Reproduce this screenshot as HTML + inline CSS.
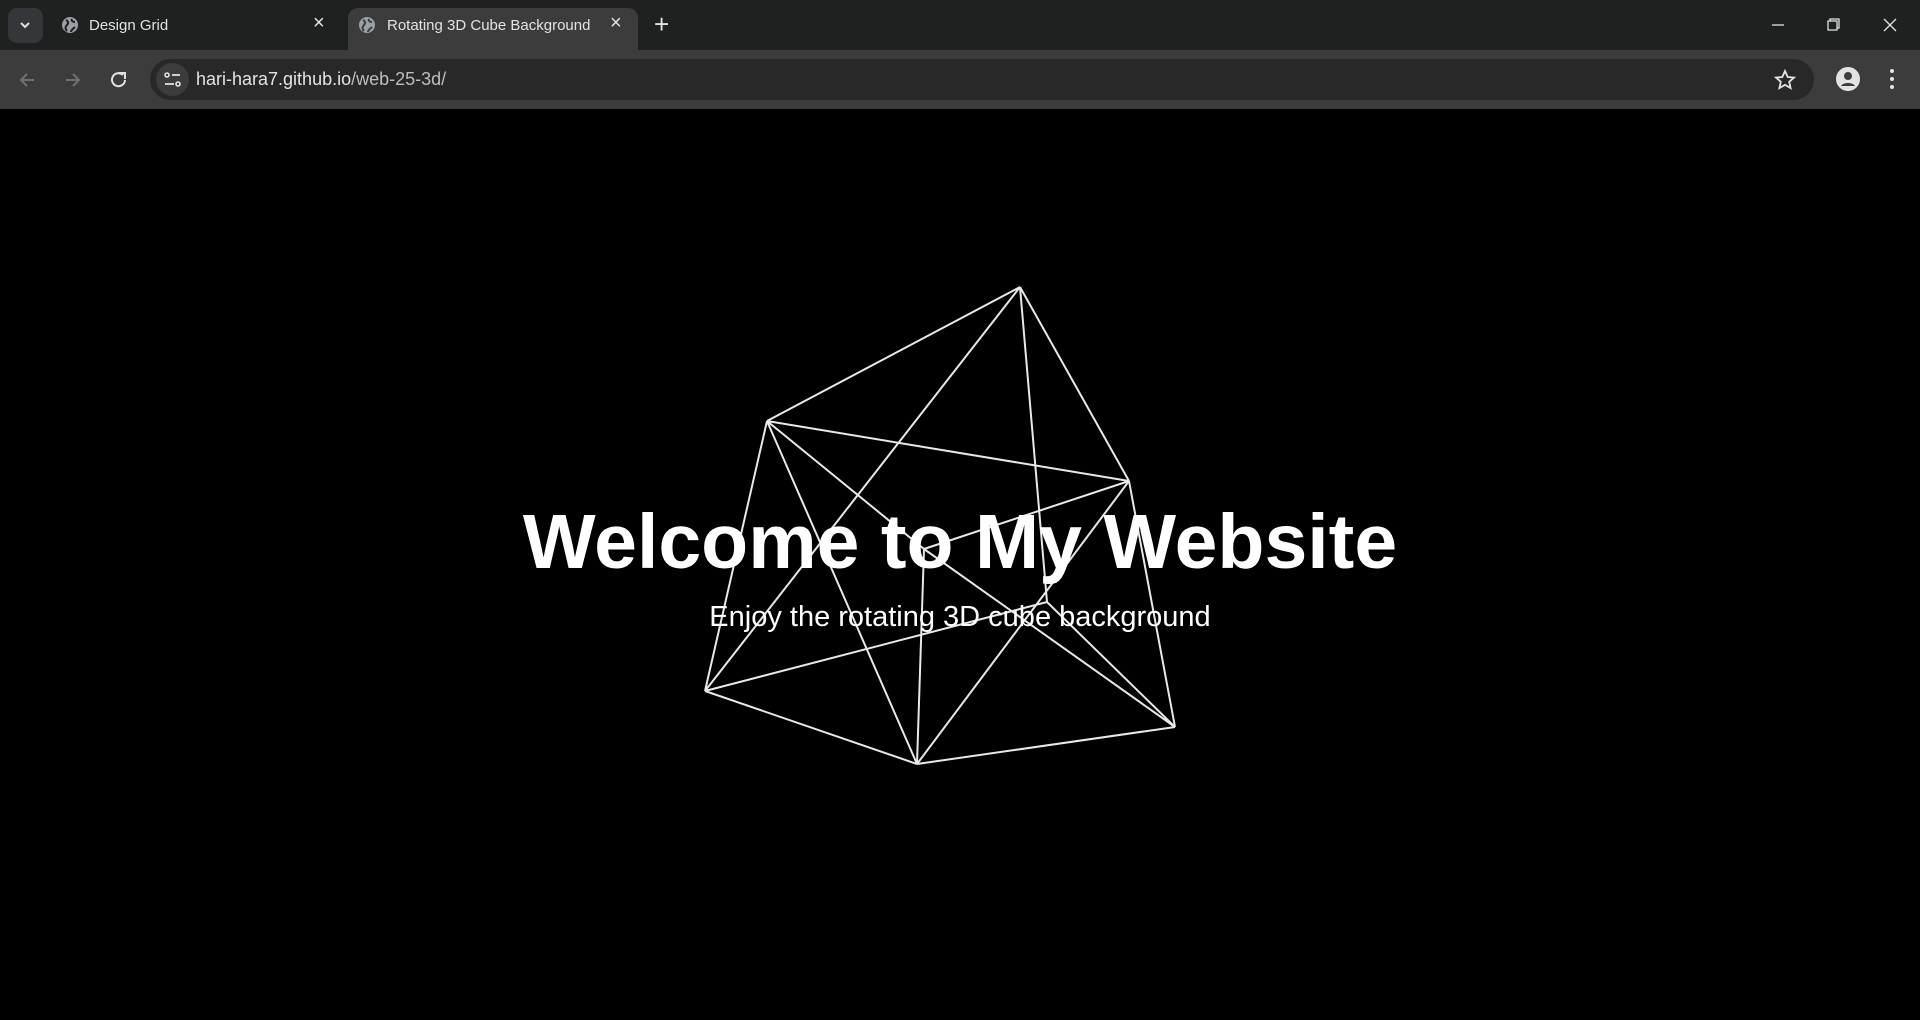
<!DOCTYPE html>
<html><head><meta charset="utf-8"><style>
html,body{margin:0;padding:0;width:1920px;height:1020px;overflow:hidden;background:#000;font-family:"Liberation Sans",Arial,sans-serif;}
.tabbar{position:absolute;left:0;top:0;width:1920px;height:50px;background:#1f2020;}
.toolbar{position:absolute;left:0;top:50px;width:1920px;height:59px;background:#3c3c3c;}
.tab{position:absolute;color:#e3e3e3;font-size:15px;}
.omni{position:absolute;left:150px;top:59px;width:1664px;height:41px;border-radius:21px;background:#282828;}
.page{position:absolute;left:0;top:109px;width:1920px;height:911px;background:#000;}
h1{position:absolute;left:0;width:1920px;top:389px;margin:0;text-align:center;color:#fff;font-size:77px;font-weight:bold;}
p{position:absolute;left:0;width:1920px;top:492px;margin:0;text-align:center;color:#fff;font-size:29px;}
</style></head><body>
<div class="tabbar">
 <div style="position:absolute;left:8px;top:8px;width:35px;height:35px;border-radius:9px;background:#35363a"></div>
 <svg style="position:absolute;left:18px;top:18px" width="14" height="14"><path d="M3 5l4 4 4-4" stroke="#e3e3e3" stroke-width="2" fill="none"/></svg>
 <svg style="position:absolute;left:61px;top:16px" width="18" height="18"><circle cx="9" cy="9" r="8" fill="#9aa0a6"/><path d="M5 4c2 1 3 3 1 5s-2 4 0 6M11 3c-1 2 1 3 3 3M10 16c0-2 2-3 4-5" stroke="#1f2020" stroke-width="2" fill="none"/></svg>
 <div class="tab" style="left:89px;top:17px">Design Grid</div>
 <div class="tab" style="left:313px;top:12px;font-size:20px">×</div>
 <div style="position:absolute;left:348px;top:8px;width:290px;height:42px;background:#3c3c3c;border-radius:10px 10px 0 0"></div>
 <svg style="position:absolute;left:358px;top:16px" width="18" height="18"><circle cx="9" cy="9" r="8" fill="#9aa0a6"/><path d="M5 4c2 1 3 3 1 5s-2 4 0 6M11 3c-1 2 1 3 3 3M10 16c0-2 2-3 4-5" stroke="#3c3c3c" stroke-width="2" fill="none"/></svg>
 <div class="tab" style="left:387px;top:17px">Rotating 3D Cube Background</div>
 <div class="tab" style="left:610px;top:12px;font-size:20px">×</div>
 <div class="tab" style="left:654px;top:9px;font-size:26px">+</div>
 <svg style="position:absolute;left:1770px;top:18px" width="140" height="14"><path d="M2 7h12" stroke="#e3e3e3" stroke-width="1.3"/><path d="M58 3h9v9h-9zM60 3v-2h9v9h-2" stroke="#e3e3e3" stroke-width="1.3" fill="none"/><path d="M114 1l12 12M126 1l-12 12" stroke="#e3e3e3" stroke-width="1.3"/></svg>
</div>
<div class="toolbar">
 <svg style="position:absolute;left:18px;top:20px" width="120" height="20"><path d="M16 10H3M9 4l-6 6 6 6" stroke="#6f6f6f" stroke-width="2" fill="none"/><path d="M48 10h13M55 4l6 6-6 6" stroke="#6f6f6f" stroke-width="2" fill="none"/><path d="M105 5a6.5 6.5 0 1 0 2 5" stroke="#e3e3e3" stroke-width="2" fill="none"/><path d="M101 3h6v6" stroke="#e3e3e3" stroke-width="2" fill="none"/></svg>
</div>
<div class="omni">
 <div style="position:absolute;left:6px;top:4px;width:33px;height:33px;border-radius:50%;background:#3c3c3c"></div>
 <svg style="position:absolute;left:13px;top:11px" width="20" height="20"><circle cx="4" cy="5" r="2" stroke="#e3e3e3" stroke-width="1.6" fill="none"/><path d="M9 5h8M2 14h9" stroke="#e3e3e3" stroke-width="1.8"/><circle cx="15" cy="14" r="2" stroke="#e3e3e3" stroke-width="1.6" fill="none"/></svg>
 <div style="position:absolute;left:46px;top:10px;font-size:18px;color:#e3e3e3">hari-hara7.github.io<span style="color:#bdbdbd">/web-25-3d/</span></div>
 <svg style="position:absolute;left:1624px;top:10px" width="22" height="22"><path d="M11 2l2.7 6 6.3.6-4.8 4.2 1.4 6.3L11 15.8 5.4 19.1l1.4-6.3L2 8.6 8.3 8z" stroke="#e3e3e3" stroke-width="1.8" fill="none"/></svg>
</div>
<svg style="position:absolute;left:1835px;top:66px" width="26" height="26"><circle cx="13" cy="13" r="12" fill="#e3e3e3"/><circle cx="13" cy="10" r="4" fill="#3c3c3c"/><path d="M6 20c2-4 12-4 14 0" fill="#3c3c3c"/></svg>
<svg style="position:absolute;left:1888px;top:68px" width="8" height="22"><circle cx="4" cy="3" r="2" fill="#e3e3e3"/><circle cx="4" cy="11" r="2" fill="#e3e3e3"/><circle cx="4" cy="19" r="2" fill="#e3e3e3"/></svg>
<div class="page">
 <svg style="position:absolute;left:0;top:-109px" width="1920" height="1020" fill="none" stroke="#e8e8e8" stroke-width="2">
  <path d="M1020 287L767 421M1020 287L1129 481M1020 287L1047 602M1020 287L705 691M767 421L1129 481M767 421L705 691M767 421L917 764M767 421L924 549M1129 481L924 549M1129 481L1175 727M1129 481L917 764M924 549L917 764M924 549L1175 727M705 691L1047 602M705 691L917 764M917 764L1175 727M1047 602L1175 727"/>
 </svg>
 <h1>Welcome to My Website</h1>
 <p>Enjoy the rotating 3D cube background</p>
</div>
</body></html>
